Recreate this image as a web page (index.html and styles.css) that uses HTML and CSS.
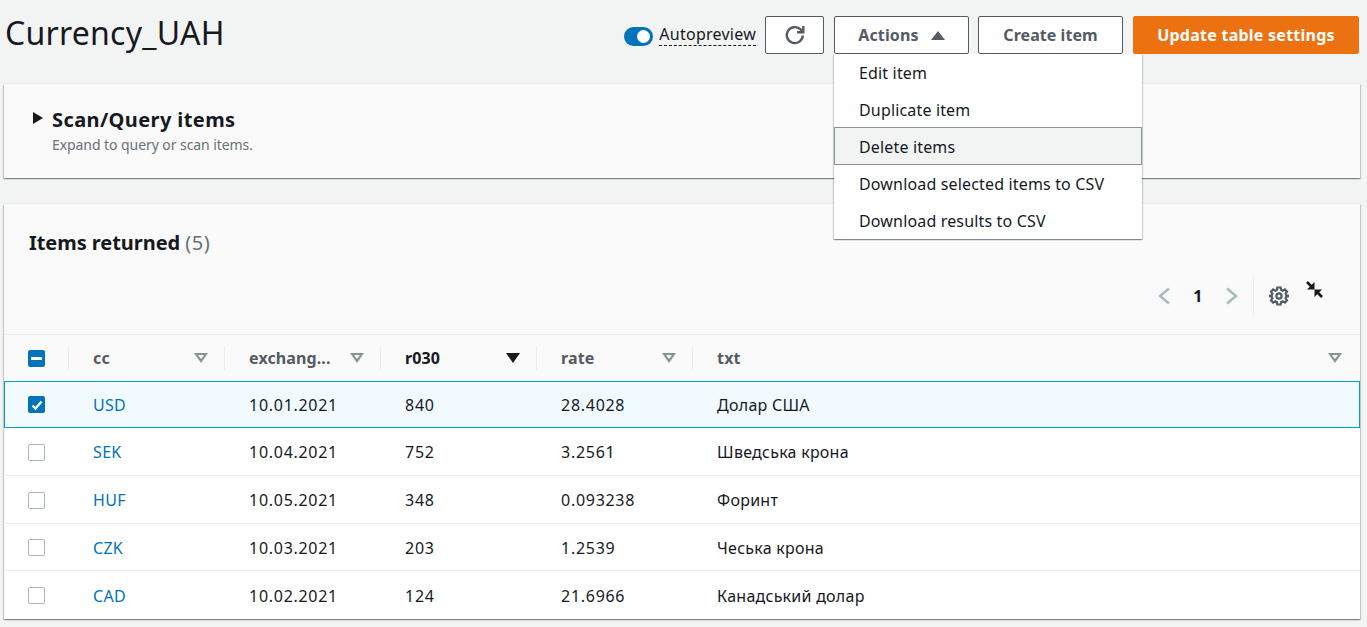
FILE: index.html
```html
<!DOCTYPE html>
<html lang="en">
<head>
  <meta charset="UTF-8" />
  <title>Currency_UAH</title>
  <link rel="stylesheet" href="styles.css">
</head>
<body>
  <header class="page-head">
    <h1>Currency_UAH</h1>
    <div class="actions">
      <label class="toggle"><span class="toggle-track"><span class="toggle-knob"></span></span><span class="toggle-label">Autopreview</span></label>
      <button class="btn btn-icon" aria-label="Refresh">
        <svg width="20" height="20" viewBox="0 0 20 20" fill="none" stroke="#545b64" stroke-width="2.400"><path d="M17.800 10.500a8 8 0 1 1-2.600-6.300l2 1.800"/><path d="M18.300 1v6.200h-6.200"/></svg>
      </button>
      <div class="menu-wrap">
        <button class="btn btn-actions">Actions <span class="caret-up"></span></button>
        <ul class="menu">
          <li>Edit item</li>
          <li>Duplicate item</li>
          <li class="active">Delete items</li>
          <li>Download selected items to CSV</li>
          <li>Download results to CSV</li>
        </ul>
      </div>
      <button class="btn btn-create">Create item</button>
      <button class="btn btn-primary">Update table settings</button>
    </div>
  </header>

  <section class="card scan">
    <span class="tri-right"></span>
    <div>
      <h2>Scan/Query items</h2>
      <p>Expand to query or scan items.</p>
    </div>
  </section>

  <section class="card items">
    <h2 class="items-title">Items returned <span>(5)</span></h2>
    <div class="tools">
      <svg width="14" height="18" viewBox="0 0 14 18" fill="none" stroke="#aab7b8" stroke-width="2.400"><path d="M12 1.500 3 9l9 7.500"/></svg>
      <span class="page-num">1</span>
      <svg width="14" height="18" viewBox="0 0 14 18" fill="none" stroke="#aab7b8" stroke-width="2.400"><path d="m2 1.500 9 7.500-9 7.500"/></svg>
      <span class="tools-sep"></span>
      <svg class="gear" width="20" height="20" viewBox="0 0 20 20" fill="none" stroke="#545b64" stroke-width="2.200"><circle cx="10" cy="10" r="2.600"/><path d="M8.300 1.500h3.400l.5 2.500 1.500.7 2.200-1.300 2.100 2.300-1.400 2 .6 1.500 2.300.6v.4l-2.300.6-.6 1.500 1.400 2-2.100 2.300-2.200-1.300-1.500.7-.5 2.500H8.300l-.5-2.500-1.500-.7-2.200 1.300-2.100-2.300 1.400-2-.6-1.500-2.300-.6v-.4l2.300-.6.600-1.500-1.400-2 2.100-2.300 2.200 1.300 1.500-.7z"/></svg>
      <svg class="collapse" width="17" height="17" viewBox="0 0 17 17" fill="none" stroke="#16191f" stroke-width="2.600"><path d="m1 1 5 5"/><path d="m16 16-5-5"/><path fill="#16191f" stroke="none" d="M8.500 1v7.500H1zM8.500 8.500H16L8.500 16z"/></svg>
    </div>

    <table>
      <thead>
        <tr>
          <th class="col-check"><span class="box box-on"><span class="dash"></span></span></th>
          <th class="col"><div class="th-in">cc<span class="sort"></span></div></th>
          <th class="col"><div class="th-in">exchang...<span class="sort"></span></div></th>
          <th class="col sorted"><div class="th-in">r030<span class="sort sort-on"></span></div></th>
          <th class="col"><div class="th-in">rate<span class="sort"></span></div></th>
          <th class="col-last"><div class="th-in">txt<span class="sort"></span></div></th>
        </tr>
      </thead>
      <tbody>
        <tr class="selected">
          <td class="cell-check"><span class="box box-on">
            <svg width="14" height="14" viewBox="0 0 14 14" fill="none" stroke="#fff" stroke-width="2.400"><path d="m2.500 7.500 3 3 6-7"/></svg>
          </span></td>
          <td><a>USD</a></td><td class="num">10.01.2021</td><td class="num">840</td><td class="num">28.4028</td><td>Долар США</td>
        </tr>
        <tr>
          <td class="cell-check"><span class="box"></span></td>
          <td><a>SEK</a></td><td class="num">10.04.2021</td><td class="num">752</td><td class="num">3.2561</td><td>Шведська крона</td>
        </tr>
        <tr>
          <td class="cell-check"><span class="box"></span></td>
          <td><a>HUF</a></td><td class="num">10.05.2021</td><td class="num">348</td><td class="num">0.093238</td><td>Форинт</td>
        </tr>
        <tr>
          <td class="cell-check"><span class="box"></span></td>
          <td><a>CZK</a></td><td class="num">10.03.2021</td><td class="num">203</td><td class="num">1.2539</td><td>Чеська крона</td>
        </tr>
        <tr>
          <td class="cell-check"><span class="box"></span></td>
          <td><a>CAD</a></td><td class="num">10.02.2021</td><td class="num">124</td><td class="num">21.6966</td><td>Канадський долар</td>
        </tr>
      </tbody>
    </table>
  </section>
</body>
</html>
```

FILE: styles.css
```css
* {
  box-sizing: border-box;
}
html, body {
  height: 627px;
  overflow: hidden;
}
body {
  margin: 0;
  padding: 0 7px 0 4px;
  background: #f2f3f3;
  color: #16191f;
  font-family: "Noto Sans", sans-serif;
  font-size: 16px;
  line-height: 22px;
  letter-spacing: 0.16px;
}

/* top bar */
.page-head {
  display: flex;
  justify-content: space-between;
  align-items: flex-start;
  height: 84px;
}
.page-head h1 {
  margin: 13px 0 0 1px;
  font-size: 32px;
  line-height: 40px;
  font-weight: 400;
  letter-spacing: 0.25px;
}
.actions {
  display: flex;
  align-items: flex-start;
  margin: 16px 1px 0 0;
}
.toggle {
  display: flex;
  align-items: center;
  height: 38px;
  margin-right: 9px;
}
.toggle-track {
  display: block;
  width: 29px;
  height: 19px;
  padding: 3px 3px 3px 13px;
  margin: 3px 6px 0 0;
  border-radius: 10px;
  background: #0073bb;
}
.toggle-knob {
  display: block;
  width: 13px;
  height: 13px;
  border-radius: 50%;
  background: #fff;
}
.toggle-label {
  border-bottom: 1px dashed #16191f;
  line-height: 21px;
  letter-spacing: 0.25px;
}
.btn {
  display: flex;
  align-items: center;
  justify-content: center;
  height: 38px;
  border: 1px solid #545b64;
  border-radius: 2px;
  background: #fff;
  color: #545b64;
  font: 700 16px/22px "Noto Sans", sans-serif;
  letter-spacing: 0.25px;
}
.btn-icon {
  width: 59px;
  margin-right: 10px;
}
.menu-wrap {
  position: relative;
  margin-right: 9px;
}
.btn-actions {
  width: 135px;
  letter-spacing: 0.15px;
}
.caret-up {
  width: 0;
  height: 0;
  margin: 0 0 0 12px;
  border-left: 7px solid transparent;
  border-right: 7px solid transparent;
  border-bottom: 9px solid #545b64;
}
.btn-create {
  width: 145px;
  margin-right: 10px;
  letter-spacing: 0.05px;
}
.btn-primary {
  width: 226px;
  border-color: #ec7211;
  background: #ec7211;
  color: #fff;
}
.menu {
  position: absolute;
  top: 38px;
  left: 0;
  z-index: 5;
  width: 308px;
  margin: 0;
  padding: 0;
  list-style: none;
  background: #fff;
  box-shadow: 0 1px 1px rgba(0, 28, 36, 0.3), 1px 1px 1px rgba(0, 28, 36, 0.15), -1px 1px 1px rgba(0, 28, 36, 0.15);
}
.menu li {
  height: 37px;
  padding: 8px 24px 0 25px;
  white-space: nowrap;
}
.menu li.active {
  height: 38px;
  margin-top: -1px;
  padding: 8px 24px 0 24px;
  border: 1px solid #879596;
  background: #f2f3f3;
}

/* cards */
.card {
  background: #fafafa;
  box-shadow: 0 1px 1px rgba(0, 28, 36, 0.3), 1px 1px 1px rgba(0, 28, 36, 0.15), -1px 1px 1px rgba(0, 28, 36, 0.15), 0 -1px 1px rgba(0, 28, 36, 0.04);
}
.scan {
  display: flex;
  height: 94px;
  padding: 23px 0 0 29px;
}
.tri-right {
  width: 0;
  height: 0;
  margin: 5px 9px 0 0;
  border-top: 6px solid transparent;
  border-bottom: 6px solid transparent;
  border-left: 10px solid #16191f;
}
.scan h2 {
  margin: 0;
  font-size: 20px;
  line-height: 26px;
  font-weight: 700;
  letter-spacing: 0.4px;
}
.scan p {
  margin: 2px 0 0;
  font-size: 14px;
  line-height: 20px;
  color: #687078;
  letter-spacing: -0.07px;
}
.items {
  height: 415px;
  margin-top: 26px;
}
.items-title {
  margin: 0;
  padding: 26px 0 0 25px;
  font-size: 20px;
  line-height: 26px;
  font-weight: 700;
  letter-spacing: -0.05px;
}
.items-title span {
  font-weight: 400;
  color: #687078;
  letter-spacing: 0.5px;
}
.tools {
  display: flex;
  align-items: center;
  justify-content: flex-end;
  height: 38px;
  margin-top: 21px;
  padding: 0 37px 0 0;
}
.page-num {
  width: 54px;
  text-align: center;
  font-weight: 700;
}
.tools-sep {
  width: 1px;
  height: 38px;
  margin: 0 15px 0 14px;
  background: #eaeded;
}
.gear {
  margin-right: 17px;
}
.collapse {
  margin-bottom: 14px;
}

/* table */
table {
  width: 100%;
  margin-top: 19px;
  border-collapse: collapse;
  table-layout: fixed;
}
thead tr {
  height: 47px;
  border-top: 1px solid #eaeded;
}
th {
  padding: 0;
  text-align: left;
  font-weight: 700;
  color: #545b64;
  letter-spacing: 0.1px;
}
.col-check {
  width: 63px;
}
.col {
  width: 156px;
}
.th-in {
  display: flex;
  align-items: center;
  justify-content: space-between;
  height: 24px;
  padding: 0 16px 0 24.6px;
  border-left: 1px solid #eaeded;
}
.col-last .th-in {
  padding-right: 18px;
}
.sorted {
  color: #16191f;
}
.sort {
  width: 0;
  height: 0;
  position: relative;
  border-left: 7px solid transparent;
  border-right: 7px solid transparent;
  border-top: 10px solid #879596;
}
.sort::after {
  content: "";
  position: absolute;
  left: -3px;
  top: -8px;
  border-left: 3px solid transparent;
  border-right: 3px solid transparent;
  border-top: 4px solid #fafafa;
}
.sort-on {
  border-top-color: #16191f;
}
.sort-on::after {
  display: none;
}
td {
  height: 47.75px;
  padding: 2px 0 0 25.6px;
  background: #fff;
  border-top: 1px solid #eaeded;
  letter-spacing: 0.25px;
}
td.num {
  letter-spacing: 0.7px;
}
td a {
  color: #0073bb;
}
td.cell-check {
  padding-left: 23px;
}
.selected td {
  height: 46px;
  padding-top: 1px;
  background: #f1faff;
  border-top: 1px solid #00a1c9;
  border-bottom: 1px solid #00a1c9;
}
.selected td.cell-check {
  padding-top: 0;
}
.selected td:first-child {
  border-left: 1px solid #00a1c9;
}
.selected td:last-child {
  border-right: 1px solid #00a1c9;
}
.box {
  display: flex;
  align-items: center;
  justify-content: center;
  width: 17px;
  height: 17px;
  border: 1px solid #aab7b8;
  border-radius: 2px;
  background: #fff;
}
.box-on {
  border-color: #0073bb;
  background: #0073bb;
}
.col-check .box {
  margin: 0 0 0 23px;
}
.dash {
  width: 11px;
  height: 3px;
  background: #fff;
}
```
